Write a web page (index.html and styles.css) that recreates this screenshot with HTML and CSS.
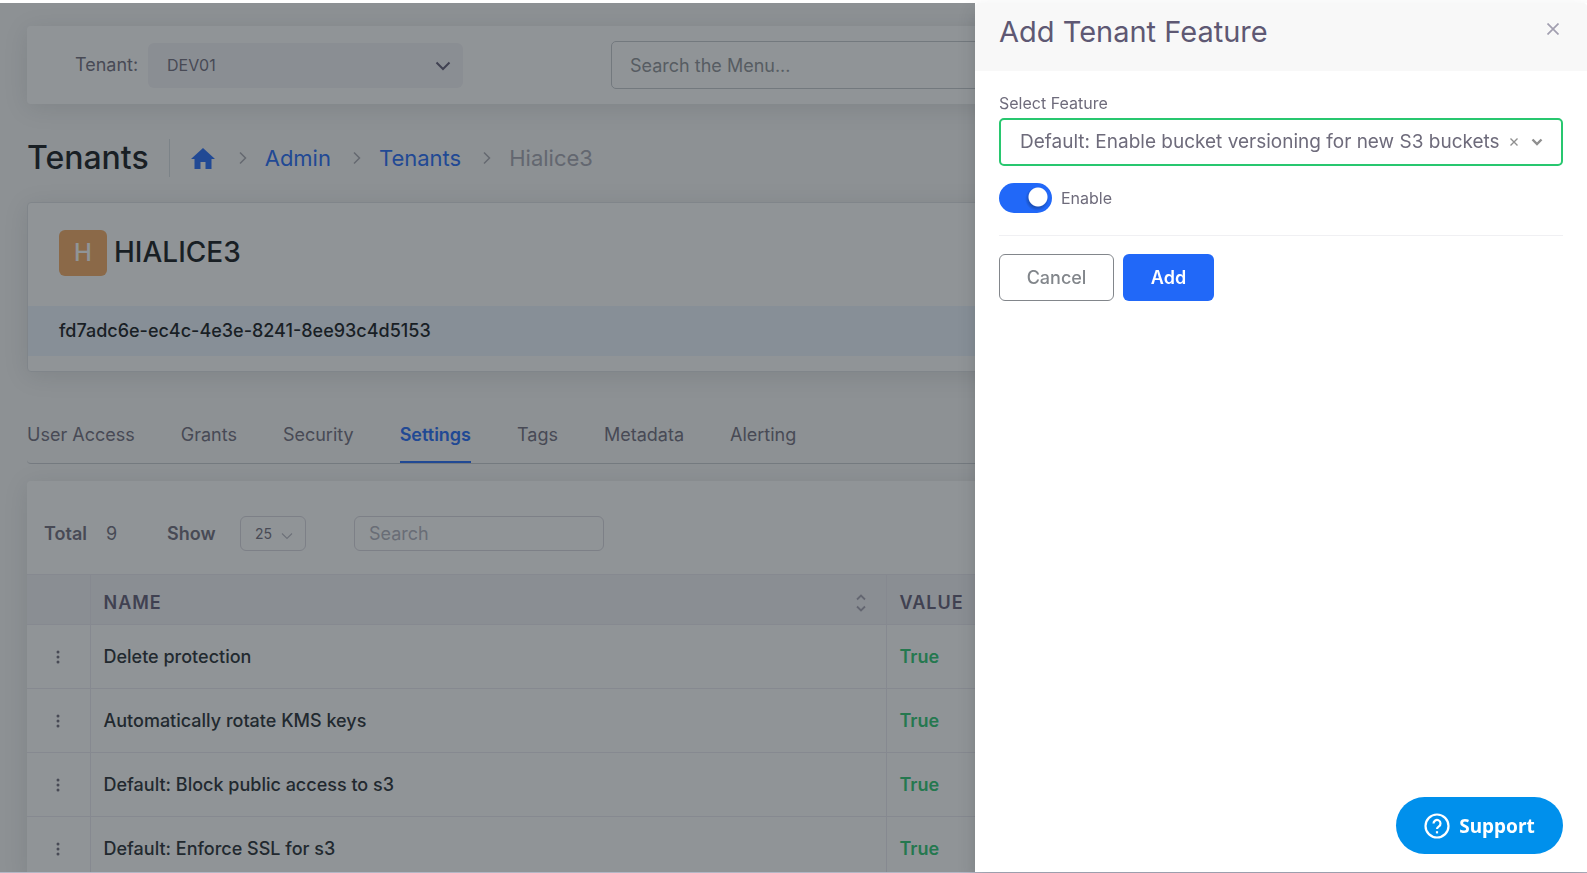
FILE: index.html
```html
<!DOCTYPE html>
<html lang="en">
<head>
<meta charset="utf-8">
<title>Tenants</title>
<link rel="stylesheet" href="styles.css">
</head>
<body>
<main class="page">
  <header class="topbar card">
    <label class="topbar-label" for="tenant">Tenant:</label>
    <div class="tenant-select">
      <select id="tenant"><option>DEV01</option></select>
      <svg class="tenant-caret" viewBox="0 0 16 10" aria-hidden="true"><path d="M1.5 1.5 8 8l6.500-6.500"/></svg>
    </div>
    <input class="menu-search" type="text" placeholder="Search the Menu..." aria-label="Search the Menu">
  </header>

  <nav class="crumbs" aria-label="Breadcrumb">
    <h1 class="page-title">Tenants</h1>
    <a class="crumb-home" href="#" aria-label="Home"><svg viewBox="0 0 24 21" aria-hidden="true"><path d="M12 0 0 11h3.500v10H9.500v-7h5v7h6V11H24z"/></svg></a>
    <svg class="crumb-sep" viewBox="0 0 8 14" aria-hidden="true"><path d="m1 1.500 5.500 5.500L1 12.500"/></svg>
    <a class="crumb" href="#">Admin</a>
    <svg class="crumb-sep" viewBox="0 0 8 14" aria-hidden="true"><path d="m1 1.500 5.500 5.500L1 12.500"/></svg>
    <a class="crumb" href="#">Tenants</a>
    <svg class="crumb-sep" viewBox="0 0 8 14" aria-hidden="true"><path d="m1 1.500 5.500 5.500L1 12.500"/></svg>
    <span class="crumb crumb-current">Hialice3</span>
  </nav>

  <section class="tenant card">
    <div class="tenant-head">
      <span class="avatar">H</span>
      <h2 class="tenant-name">HIALICE3</h2>
    </div>
    <p class="tenant-id">fd7adc6e-ec4c-4e3e-8241-8ee93c4d5153</p>
  </section>

  <nav class="tabs" aria-label="Tenant sections">
    <a class="tab" href="#">User Access</a>
    <a class="tab" href="#">Grants</a>
    <a class="tab" href="#">Security</a>
    <a class="tab tab-active" href="#">Settings</a>
    <a class="tab" href="#">Tags</a>
    <a class="tab" href="#">Metadata</a>
    <a class="tab" href="#">Alerting</a>
  </nav>

  <section class="listing card">
    <div class="tools">
      <span class="tools-label">Total</span>
      <span class="tools-count">9</span>
      <label class="tools-label tools-show" for="show">Show</label>
      <div class="show-select">
        <select id="show"><option>25</option></select>
        <svg class="show-caret" viewBox="0 0 12 8" aria-hidden="true"><path d="m1 1.500 5 5 5-5"/></svg>
      </div>
      <input class="table-search" type="text" placeholder="Search" aria-label="Search">
    </div>
    <table class="grid">
      <colgroup><col class="col-menu"><col class="col-name"><col></colgroup>
      <thead>
        <tr>
          <th></th>
          <th><div class="th-inner">NAME<svg class="sort" viewBox="0 0 10 18" aria-hidden="true"><path d="m1 5.500 4-4 4 4M1 12.500l4 4 4-4"/></svg></div></th>
          <th>VALUE</th>
        </tr>
      </thead>
      <tbody>
        <tr><td><button class="dots" type="button" aria-label="Actions"><svg viewBox="0 0 4 14"><circle cx="2" cy="2" r="1.500"/><circle cx="2" cy="7" r="1.500"/><circle cx="2" cy="12" r="1.500"/></svg></button></td><td>Delete protection</td><td class="val">True</td></tr>
        <tr><td><button class="dots" type="button" aria-label="Actions"><svg viewBox="0 0 4 14"><circle cx="2" cy="2" r="1.500"/><circle cx="2" cy="7" r="1.500"/><circle cx="2" cy="12" r="1.500"/></svg></button></td><td>Automatically rotate KMS keys</td><td class="val">True</td></tr>
        <tr><td><button class="dots" type="button" aria-label="Actions"><svg viewBox="0 0 4 14"><circle cx="2" cy="2" r="1.500"/><circle cx="2" cy="7" r="1.500"/><circle cx="2" cy="12" r="1.500"/></svg></button></td><td>Default: Block public access to s3</td><td class="val">True</td></tr>
        <tr><td><button class="dots" type="button" aria-label="Actions"><svg viewBox="0 0 4 14"><circle cx="2" cy="2" r="1.500"/><circle cx="2" cy="7" r="1.500"/><circle cx="2" cy="12" r="1.500"/></svg></button></td><td>Default: Enforce SSL for s3</td><td class="val">True</td></tr>
      </tbody>
    </table>
  </section>
</main>

<div class="backdrop"></div>

<aside class="drawer" role="dialog" aria-labelledby="drawer-title">
  <header class="drawer-head">
    <h2 class="drawer-title" id="drawer-title">Add Tenant Feature</h2>
    <button class="close" type="button" aria-label="Close"><svg viewBox="0 0 12 12"><path d="m.5.500 11 11M11.500.500l-11 11"/></svg></button>
  </header>
  <form class="drawer-body">
    <label class="field-label" for="feature">Select Feature</label>
    <div class="feature">
      <select id="feature"><option>Default: Enable bucket versioning for new S3 buckets</option></select>
      <button class="clear" type="button" aria-label="Clear"><svg viewBox="0 0 8 8"><path d="m.5.500 7 7M7.500.500l-7 7"/></svg></button>
      <svg class="feature-caret" viewBox="0 0 12 8" aria-hidden="true"><path d="m1.500 1.500 4.500 4.500 4.500-4.500"/></svg>
    </div>
    <div class="switch-row">
      <input class="switch" id="enable" type="checkbox" checked>
      <label class="field-label" for="enable">Enable</label>
    </div>
    <div class="actions">
      <button class="btn btn-outline" type="button">Cancel</button>
      <button class="btn btn-primary" type="button">Add</button>
    </div>
  </form>
  <button class="support" type="button">
    <svg viewBox="0 0 26 26" aria-hidden="true"><circle cx="13" cy="13" r="11.500"/><path d="M9.500 10.500a3.500 3.500 0 1 1 5.400 2.900c-1.200.8-1.900 1.300-1.900 2.600"/><path d="M13 18.200v2.200"/></svg>
    Support
  </button>
</aside>
</body>
</html>
```

FILE: styles.css
```css
* { box-sizing: border-box; }

body {
  margin: 0;
  height: 100vh;
  overflow: hidden;
  border-top: 3px solid #fff;
  background: #f8f8f8;
  color: #6e6b7b;
  font-family: Inter, "Open Sans", sans-serif;
  font-size: 18px;
  line-height: 24px;
}

h1, h2, p { margin: 0; font-weight: 500; }
a { color: inherit; text-decoration: none; }
svg { display: block; fill: none; stroke: currentColor; flex: none; }
button, input, select { font: inherit; color: inherit; }
button { padding: 0; border: 0; background: none; }
select { appearance: none; border: 0; background: none; }

.page { padding: 23px 27px 0; }
.card { background: #fff; border-radius: 4px; box-shadow: 0 4px 24px rgba(34, 41, 47, 0.12); }

.topbar { display: flex; align-items: center; height: 78px; padding: 0 48px; }
.topbar-label { width: 73px; }
.tenant-select { position: relative; width: 315px; margin-right: 148px; }
.tenant-select select { display: block; width: 100%; height: 45px; padding: 0 19px; border-radius: 6px; background: #f3f2f7; font-size: 16px; }
.tenant-caret { position: absolute; right: 12px; top: 18px; width: 16px; height: 10px; stroke-width: 2; color: #5e5873; }
.menu-search { flex: 1; height: 48px; padding: 0 18px; border: 1px solid #c4c8cc; border-radius: 5px; background: none; }
.menu-search::placeholder { color: #8c8f94; opacity: 1; }

.crumbs { display: flex; align-items: center; height: 38px; margin-top: 35px; font-size: 22px; }
.page-title { padding-right: 20px; margin-right: 21px; border-right: 1px solid #d6dce1; color: #101418; font-size: 32px; line-height: 38px; }
.crumb-home { color: #2168f8; margin-right: 24px; }
.crumb-home svg { width: 24px; height: 21px; fill: currentColor; stroke: none; }
.crumb-sep { width: 8px; height: 14px; margin-right: 18px; color: #a8a8b0; stroke-width: 1.5; }
.crumb { margin-right: 22px; color: #2168f8; }
.crumb-current { color: #a4a4b0; }

.tenant { margin-top: 25px; padding-bottom: 15px; border: 1px solid #dfe1e4; }
.tenant-head { display: flex; align-items: flex-start; gap: 7px; height: 103px; padding: 27px 31px; }
.avatar { width: 48px; height: 46px; border-radius: 6px; background: #f4a961; color: #fff; font-size: 24px; line-height: 46px; text-align: center; font-weight: 500; }
.tenant-name { color: #101418; font-size: 28px; line-height: 44px; }
.tenant-id { padding: 0 31px; background: #ecf5ff; color: #101418; line-height: 50px; }

.tabs { display: flex; gap: 46px; margin-top: 46px; border-bottom: 1px solid #c8cbd0; border-radius: 4px; }
.tab { height: 45px; line-height: 34px; }
.tab-active { border-bottom: 2px solid #2168f8; color: #2168f8; font-weight: 600; }

.listing { margin-top: 17px; }
.tools { display: flex; align-items: center; height: 93px; padding: 12px 17px 0; }
.tools-label { width: 62px; font-weight: 600; }
.tools-count { width: 61px; }
.tools-show { width: 73px; }
.show-select { position: relative; width: 66px; margin-right: 48px; }
.show-select select { display: block; width: 100%; height: 35px; padding: 0 14px; border: 1px solid #d8d6de; border-radius: 6px; font-size: 14px; }
.show-caret { position: absolute; right: 13px; top: 16px; width: 12px; height: 8px; color: #b9b9c3; stroke-width: 1.2; }
.table-search { width: 250px; height: 35px; padding: 0 14px; border: 1px solid #d8d6de; border-radius: 6px; background: none; }
.table-search::placeholder { color: #b0b0bc; opacity: 1; }

.grid { width: 100%; table-layout: fixed; border-collapse: collapse; color: #22292f; font-weight: 500; }
.col-menu { width: 63px; }
.col-name { width: 796px; }
.grid th, .grid td { padding: 0 13px; border: 1px solid #ebe9f1; text-align: left; }
.grid th:first-child, .grid td:first-child { border-left: 0; }
.grid th { height: 50px; padding-top: 6px; background: #f3f2f7; color: #5e5873; font-weight: 600; letter-spacing: 1px; }
.grid td { height: 64px; }
.grid .val { color: #28c76f; font-weight: 600; }
.th-inner { display: flex; justify-content: space-between; align-items: center; padding-right: 7px; }
.sort { width: 10px; height: 18px; stroke-width: 1.8; color: #a5a3b2; }
.dots { display: block; margin: 0 auto; color: #6e6b7b; }
.dots svg { width: 4px; height: 14px; fill: currentColor; stroke: none; }

.backdrop { position: fixed; inset: 3px 0 0; background: rgba(34, 41, 47, 0.5); border-bottom: 1px solid #b4b7c6; }

.drawer {
  position: fixed;
  inset: 3px 0 1px auto;
  width: 612px;
  background: #fff;
  box-shadow: 0 8px 16px rgba(34, 41, 47, 0.2);
}
.drawer-head { display: flex; justify-content: space-between; align-items: flex-start; padding: 10px 28px 20px 24px; border-radius: 4px 4px 0 0; background: #f8f8f8; }
.drawer-title { color: #5e5873; font-size: 29px; line-height: 38px; font-weight: 400; }
.close { padding: 10px 0; color: #a29fb0; }
.close svg { width: 12px; height: 12px; stroke-width: 1.7; }
.drawer-body { padding: 22px 24px; }
.field-label { display: block; font-size: 16px; line-height: 20px; }
.feature { display: flex; align-items: center; height: 48px; margin-top: 5px; padding: 0 18px 0 15px; border: 2px solid #28c76f; border-radius: 5px; }
.feature select { flex: 1; min-width: 0; height: 44px; padding: 0 0 0 4px; font-size: 19px; }
.clear { margin: 0 13px 0 6px; color: #8f8f8f; }
.clear svg { width: 8px; height: 8px; stroke-width: 1.4; }
.feature-caret { width: 12px; height: 8px; color: #8f8f8f; stroke-width: 2.4; }
.switch-row { display: flex; align-items: center; gap: 9px; margin-top: 17px; padding-bottom: 22px; border-bottom: 1px solid #f0f0f3; }
.switch {
  appearance: none;
  width: 53px;
  height: 30px;
  margin: 0;
  border-radius: 15px;
  background:
    radial-gradient(circle at 39px 14px, #fff 9px, transparent 10px),
    radial-gradient(circle at 38px 16px, rgba(0, 0, 0, 0.25) 8px, transparent 12px),
    #2168f8;
}
.actions { display: flex; gap: 9px; margin-top: 18px; }
.btn { height: 47px; border-radius: 6px; font-weight: 500; }
.btn-outline { width: 115px; border: 1px solid #82868b; color: #82868b; }
.btn-primary { width: 91px; background: #2168f8; color: #fff; font-weight: 600; }

.support {
  position: absolute;
  right: 24px;
  bottom: 18px;
  display: flex;
  align-items: center;
  justify-content: center;
  gap: 9px;
  width: 167px;
  height: 57px;
  border-radius: 29px;
  background: #0090ec;
  color: #fff;
  font-family: "Noto Sans", sans-serif;
  font-size: 19px;
  font-weight: 700;
}
.support svg { width: 26px; height: 26px; stroke-width: 2.2; }
```
